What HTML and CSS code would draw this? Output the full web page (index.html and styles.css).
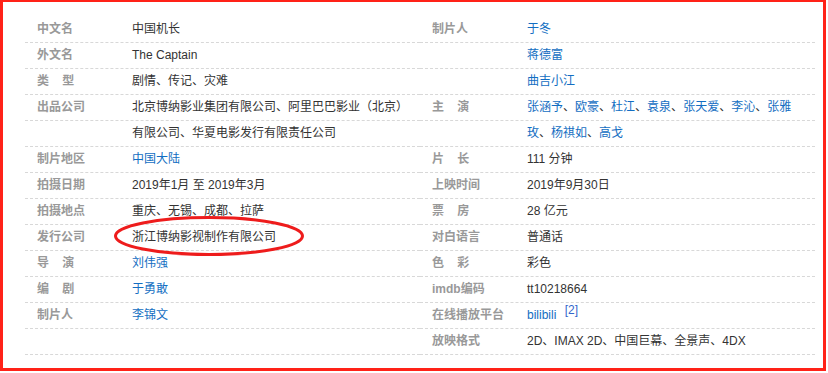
FILE: index.html
```html
<!DOCTYPE html>
<html lang="zh-CN">
<head>
<meta charset="utf-8">
<title>中国机长 基本信息</title>
<link rel="stylesheet" href="styles.css">
</head>
<body>
<div class="frame">
  <div class="basic-info">
    <dl class="col">
      <div class="row"><dt>中文名</dt><dd>中国机长</dd></div>
      <div class="row"><dt>外文名</dt><dd>The Captain</dd></div>
      <div class="row"><dt>类&nbsp;&nbsp;&nbsp;&nbsp;型</dt><dd>剧情、传记、灾难</dd></div>
      <div class="row"><dt>出品公司</dt><dd>北京博纳影业集团有限公司、阿里巴巴影业（北京）</dd></div>
      <div class="row"><dt></dt><dd>有限公司、华夏电影发行有限责任公司</dd></div>
      <div class="row"><dt>制片地区</dt><dd><a href="#">中国大陆</a></dd></div>
      <div class="row"><dt>拍摄日期</dt><dd>2019年1月 至 2019年3月</dd></div>
      <div class="row"><dt>拍摄地点</dt><dd>重庆、无锡、成都、拉萨</dd></div>
      <div class="row"><dt>发行公司</dt><dd>浙江博纳影视制作有限公司</dd></div>
      <div class="row"><dt>导&nbsp;&nbsp;&nbsp;&nbsp;演</dt><dd><a href="#">刘伟强</a></dd></div>
      <div class="row"><dt>编&nbsp;&nbsp;&nbsp;&nbsp;剧</dt><dd><a href="#">于勇敢</a></dd></div>
      <div class="row"><dt>制片人</dt><dd><a href="#">李锦文</a></dd></div>
      <div class="row"><dt></dt><dd></dd></div>
    </dl>
    <dl class="col">
      <div class="row"><dt>制片人</dt><dd><a href="#">于冬</a></dd></div>
      <div class="row"><dt></dt><dd><a href="#">蒋德富</a></dd></div>
      <div class="row"><dt></dt><dd><a href="#">曲吉小江</a></dd></div>
      <div class="row"><dt>主&nbsp;&nbsp;&nbsp;&nbsp;演</dt><dd><a href="#">张涵予</a>、<a href="#">欧豪</a>、<a href="#">杜江</a>、<a href="#">袁泉</a>、<a href="#">张天爱</a>、<a href="#">李沁</a>、<a href="#">张雅</a></dd></div>
      <div class="row"><dt></dt><dd><a href="#">玫</a>、<a href="#">杨祺如</a>、<a href="#">高戈</a></dd></div>
      <div class="row"><dt>片&nbsp;&nbsp;&nbsp;&nbsp;长</dt><dd>111 分钟</dd></div>
      <div class="row"><dt>上映时间</dt><dd>2019年9月30日</dd></div>
      <div class="row"><dt>票&nbsp;&nbsp;&nbsp;&nbsp;房</dt><dd>28 亿元</dd></div>
      <div class="row"><dt>对白语言</dt><dd>普通话</dd></div>
      <div class="row"><dt>色&nbsp;&nbsp;&nbsp;&nbsp;彩</dt><dd>彩色</dd></div>
      <div class="row"><dt>imdb编码</dt><dd>tt10218664</dd></div>
      <div class="row"><dt>在线播放平台</dt><dd><a href="#">bilibili</a> <sup class="ref">[2]</sup></dd></div>
      <div class="row"><dt>放映格式</dt><dd>2D、IMAX 2D、中国巨幕、全景声、4DX</dd></div>
    </dl>
  </div>
  <svg class="mark" width="200" height="46" viewBox="0 0 200 46" aria-hidden="true">
    <ellipse cx="100" cy="23" rx="93.5" ry="18.5" fill="none" stroke="#ee1c1c" stroke-width="3"/>
  </svg>
</div>
</body>
</html>
```
FILE: styles.css
```css
html, body {
  margin: 0;
  padding: 0;
  background: #fff;
}

.frame {
  position: relative;
  box-sizing: border-box;
  width: 826px;
  height: 371px;
  border: 3px solid #ff2218;
  border-top-width: 2px;
  padding: 15px 0 0 22px;
  font-family: "Liberation Sans", Arial, "Noto Sans CJK SC", sans-serif;
  font-size: 12px;
  color: #333;
}

.basic-info {
  display: flex;
}

.col {
  margin: 0;
  width: 395px;
}

.row {
  display: flex;
  height: 25px;
  line-height: 25px;
  border-bottom: 1px dashed #d8d8d8;
}

.row dt {
  flex: none;
  width: 90px;
  padding: 0 5px 0 12px;
  font-weight: bold;
  color: #999;
  white-space: nowrap;
}

.row dd {
  margin: 0;
  flex: 1;
  padding-right: 12px;
  white-space: nowrap;
}

.row a {
  color: #136ec2;
  text-decoration: none;
}

.ref {
  font-size: 12px;
  line-height: 0;
  vertical-align: baseline;
  position: relative;
  top: -5px;
  margin-left: 2px;
  padding: 0 3px;
  color: #3366cc;
}

.mark {
  position: absolute;
  left: 106px;
  top: 211px;
}
```
